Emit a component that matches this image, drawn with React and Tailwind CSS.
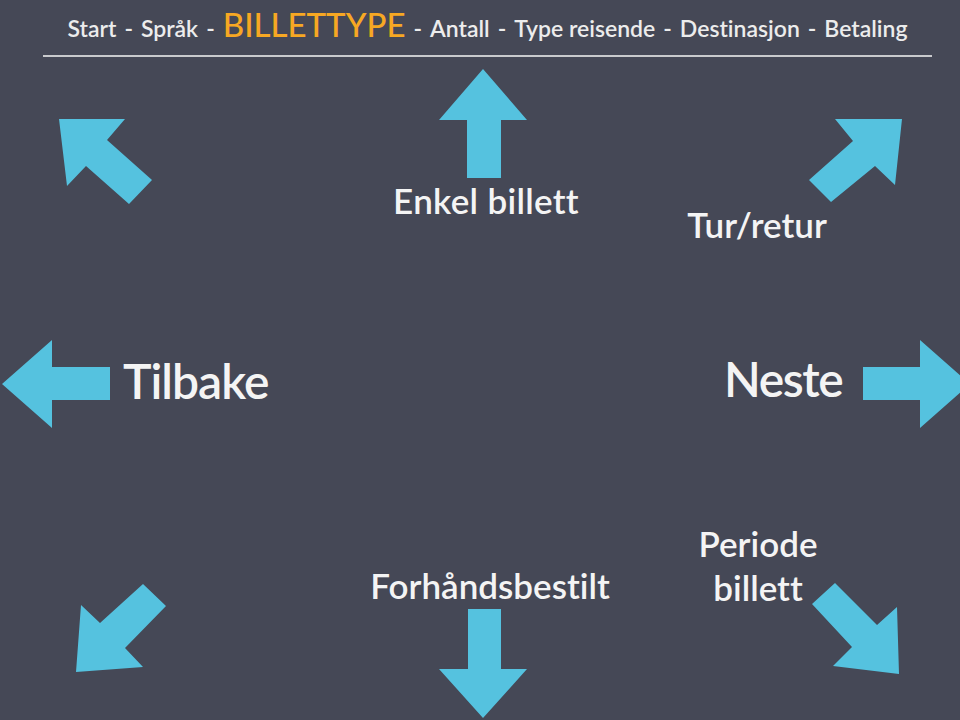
const steps = ["Start", "Språk", "BILLETTYPE", "Antall", "Type reisende", "Destinasjon", "Betaling"];

const arrows = [
  // up
  "483,69 527,120 501,120 501,178 467,178 467,120 439,120",
  // up-left
  "59,119 125,119 107,140 152,180 129,204 86,166 67,186",
  // up-right
  "902,119 895,185 875,166 831,202 809,180 853,141 835,119",
  // left
  "2,384 52,340 52,367 110,367 110,400 52,400 52,428",
  // right
  "863,367 920,367 920,340 970,384 920,428 920,400 863,400",
  // down-left
  "76,672 81,605 100,623 143,584 166,606 125,648 143,667",
  // down
  "468,609 501,609 501,669 527,669 483,718 439,669 468,669",
  // down-right
  "812,604 835,583 877,625 897,607 899,674 833,666 852,647",
];

const App = () => {
  return (
    <div
      className="relative w-[960px] h-[720px] overflow-hidden bg-[#454856] text-[#f4f4f4] [font-variant-ligatures:none]"
      style={{ fontFamily: 'Lato, "Open Sans", sans-serif' }}
    >
      <div className="ml-[43px] w-[889px] flex items-baseline justify-center gap-[8px] pt-[8px] pb-[14px] border-b-2 border-[#c9cacd] text-[#ececec] font-semibold">
        {steps.map((step, i) => (
          <div key={step} className="flex items-baseline gap-[8px]">
            {i > 0 && <span className="text-[23px] leading-none">-</span>}
            <span
              className={
                step === "BILLETTYPE"
                  ? "text-[33px] leading-none text-[#f7a823] font-medium"
                  : "text-[23px] leading-none"
              }
            >
              {step}
            </span>
          </div>
        ))}
      </div>

      <svg className="absolute inset-0" width="960" height="720" viewBox="0 0 960 720">
        {arrows.map((points) => (
          <polygon key={points} points={points} fill="#55c2df" />
        ))}
      </svg>

      <div className="absolute left-[386px] top-[183px] w-[200px] text-center text-[35px] leading-none font-semibold tracking-[0.3px]">
        Enkel billett
      </div>
      <div className="absolute left-[657px] top-[207px] w-[200px] text-center text-[35px] leading-none font-semibold">
        Tur/retur
      </div>
      <div className="absolute left-[123px] top-[357px] text-[48px] leading-none font-semibold tracking-[-1px]">
        Tilbake
      </div>
      <div className="absolute left-[724px] top-[355px] text-[48px] leading-none font-semibold tracking-[-1.4px]">
        Neste
      </div>
      <div className="absolute left-[340px] top-[568px] w-[300px] text-center text-[35px] leading-none font-semibold">
        Forhåndsbestilt
      </div>
      <div className="absolute left-[658px] top-[521px] w-[200px] text-center text-[35px] leading-[44px] font-semibold">
        Periode
        <br />
        billett
      </div>
    </div>
  );
};

export default App;
